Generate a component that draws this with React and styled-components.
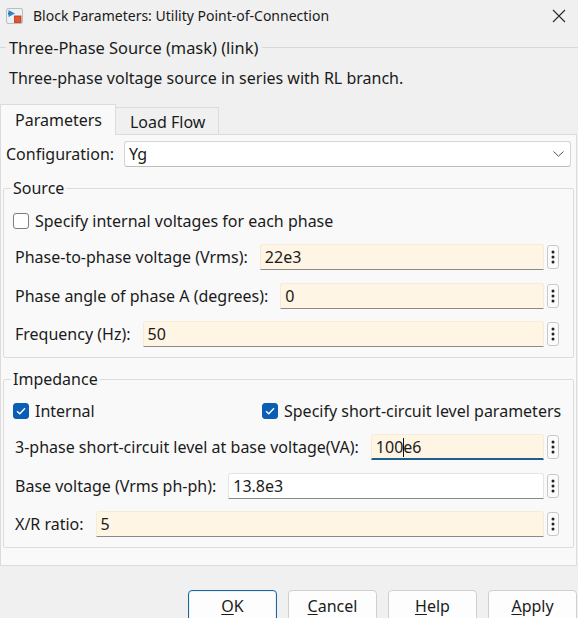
import React from "react";
import styled, { createGlobalStyle, css } from "styled-components";

const Global = createGlobalStyle`
  html, body { margin: 0; padding: 0; background: #f0f0f0; }
  body {
    font-family: "Noto Sans", "Open Sans", sans-serif;
    font-size: 16px;
    color: #1b1b1b;
  }
  * { box-sizing: border-box; }
`;

const Window = styled.div`
  width: 578px;
  height: 618px;
  overflow: hidden;
  display: flex;
  flex-direction: column;
  background: #f0f0f0;
`;

/* ---------- title bar ---------- */

const TitleBar = styled.div`
  height: 32px;
  flex: none;
  display: flex;
  align-items: center;
  padding: 0 12px 0 6px;
`;

const Title = styled.div`
  flex: 1;
  margin-left: 10px;
  font-size: 14px;
  line-height: 20px;
  color: #1a1a1a;
`;

const CloseButton = styled.div`
  width: 14px;
  height: 14px;
  display: flex;
  color: #2a2a2a;
`;

const BlockIcon = () => (
  <svg width="17" height="16" viewBox="0 0 17 16">
    <rect x="0.5" y="0.5" width="16" height="15" rx="1.5" fill="#eef1f4" stroke="#b8bec6" />
    <path d="M2.5 2 L9 5.5 L2.5 9 Z" fill="#2f86c8" />
    <rect x="2" y="4.8" width="1.4" height="1.4" fill="#1d5f93" />
    <rect x="8.5" y="8" width="6.5" height="6.5" fill="#e4572e" stroke="#b23a18" strokeWidth="0.8" />
  </svg>
);

const CloseIcon = () => (
  <svg width="14" height="14" viewBox="0 0 14 14">
    <path d="M1 1 L13 13 M13 1 L1 13" stroke="currentColor" strokeWidth="1.1" />
  </svg>
);

/* ---------- mask description ---------- */

const MaskHeader = styled.div`
  margin-top: 5px;
  height: 22px;
  display: flex;
  align-items: center;
`;

const Rule = styled.div`
  height: 1px;
  margin-top: -2px;
  background: #d8d8d8;
  width: ${(p) => (p.$grow ? "auto" : "6px")};
  flex: ${(p) => (p.$grow ? 1 : "none")};
`;

const MaskTitle = styled.div`
  padding: 0 4px 0 3px;
  font-size: 16.4px;
  line-height: 22px;
`;

const Description = styled.div`
  margin-top: 8px;
  padding-left: 9px;
  line-height: 22px;
`;

const Divider = styled.div`
  margin-top: 8px;
  height: 1px;
  background: #dadada;
`;

/* ---------- tabs ---------- */

const TabBar = styled.div`
  margin-top: 7px;
  height: 30px;
  display: flex;
  align-items: flex-end;
  position: relative;
  z-index: 1;
`;

const Tab = styled.div`
  padding: 0 13px 0 14px;
  line-height: 22px;
  display: flex;
  align-items: center;
  border: 1px solid #dcdcdc;
  border-bottom: none;
  ${(p) =>
    p.$active
      ? css`
          height: 31px;
          margin-bottom: -1px;
          background: #f9f9f9;
          padding-bottom: 1px;
        `
      : css`
          height: 27px;
          background: #f0f0f0;
          border-left: none;
          padding-top: 1px;
        `}
`;

const TabPanel = styled.div`
  width: 577px;
  height: 432px;
  flex: none;
  border: 1px solid #dcdcdc;
  background: #f9f9f9;
  padding: 6px 2px 0 2px;
  display: flex;
  flex-direction: column;
`;

/* ---------- controls ---------- */

const ConfigRow = styled.div`
  display: flex;
  align-items: center;
  gap: 10px;
  margin: 0 3px;
  height: 26px;
`;

const Label = styled.div`
  flex: none;
  line-height: 22px;
  white-space: nowrap;
`;

const Select = styled.div`
  flex: 1;
  height: 26px;
  display: flex;
  align-items: center;
  justify-content: space-between;
  padding: 0 6px 0 4px;
  background: #ffffff;
  border: 1px solid #d4d4d4;
  border-bottom-color: #bdbdbd;
  border-radius: 3px;
`;

const Chevron = () => (
  <svg width="11" height="6" viewBox="0 0 11 6">
    <path d="M0.5 0.5 L5.5 5.2 L10.5 0.5" fill="none" stroke="#555" strokeWidth="1" />
  </svg>
);

const Group = styled.fieldset`
  margin: ${(p) => p.$top}px 0 0 0;
  padding: 0 14px ${(p) => p.$bottom}px 11px;
  border: 1px solid #dcdcdc;
  border-radius: 2px;
  display: flex;
  flex-direction: column;
  gap: 12.6px;
  min-width: 0;
`;

const GroupTitle = styled.legend`
  margin-left: -4px;
  padding: 0 2px;
  line-height: 22px;
  height: 22px;
`;

const CheckRow = styled.div`
  margin-top: ${(p) => p.$top}px;
  margin-bottom: -0.6px;
  margin-left: -2px;
  height: 22px;
  display: grid;
  grid-template-columns: 249px 1fr;
  align-items: center;
`;

const Check = styled.div`
  display: flex;
  align-items: center;
  gap: 6px;
  white-space: nowrap;
`;

const Box = styled.span`
  width: 16px;
  height: 16px;
  flex: none;
  border-radius: 3px;
  display: flex;
  align-items: center;
  justify-content: center;
  ${(p) =>
    p.$checked
      ? css`
          background: #0a5fb4;
          border: 1px solid #0a5fb4;
        `
      : css`
          background: #ffffff;
          border: 1px solid #7d7d7d;
        `}
`;

const CheckMark = () => (
  <svg width="10" height="8" viewBox="0 0 10 8">
    <path d="M1 4.2 L3.8 6.8 L9 1.2" fill="none" stroke="#fff" strokeWidth="1.4" />
  </svg>
);

const ParamRow = styled.div`
  height: 26px;
  display: flex;
  align-items: center;
`;

const Field = styled.div`
  flex: 1;
  height: 26px;
  margin-left: 12px;
  padding: 0 4px;
  display: flex;
  align-items: center;
  line-height: 22px;
  border: 1px solid ${(p) => (p.$plain ? "#e4e4e4" : "#f6ebd6")};
  border-bottom: 1px solid #8a8a8a;
  border-radius: 3px 3px 0 0;
  background: ${(p) => (p.$plain ? "#ffffff" : "#fef5e5")};
  ${(p) =>
    p.$focused &&
    css`
      border-bottom: 2px solid #1d5f8f;
      padding-top: 1px;
    `}
`;

const Caret = styled.span`
  display: inline-block;
  width: 1px;
  height: 19px;
  background: #111;
  margin: 0 -1px 0 0;
`;

const MoreButton = styled.div`
  flex: none;
  width: 12px;
  height: 24px;
  margin-left: 3px;
  display: flex;
  align-items: center;
  justify-content: center;
  background: #fbfbfb;
  border: 1px solid #c9c9c9;
  border-radius: 3px;
`;

const Dots = () => (
  <svg width="4" height="14" viewBox="0 0 4 14">
    <circle cx="2" cy="2" r="1.5" fill="#222" />
    <circle cx="2" cy="7" r="1.5" fill="#222" />
    <circle cx="2" cy="12" r="1.5" fill="#222" />
  </svg>
);

/* ---------- footer ---------- */

const Footer = styled.div`
  margin-top: 24px;
  display: flex;
  justify-content: flex-end;
  gap: 11px;
  padding-right: 1px;
`;

const Button = styled.div`
  width: 89px;
  height: 32px;
  flex: none;
  display: flex;
  align-items: center;
  justify-content: center;
  line-height: 22px;
  background: #fdfdfd;
  border-radius: 4px;
  border: 1px solid ${(p) => (p.$primary ? "#1a64a0" : "#cfcfcf")};
  ${(p) =>
    p.$primary &&
    css`
      box-shadow: inset 0 0 0 1px #e9f1f8;
    `}
`;

const Key = styled.span`
  text-decoration: underline;
  text-underline-offset: 2px;
  text-decoration-thickness: 1px;
`;

const Param = ({ label, value, plain, focused, children }) => (
  <ParamRow>
    <Label>{label}</Label>
    <Field $plain={plain} $focused={focused}>
      {children ?? value}
    </Field>
    <MoreButton>
      <Dots />
    </MoreButton>
  </ParamRow>
);

export default function App() {
  return (
    <Window>
      <Global />
      <TitleBar>
        <BlockIcon />
        <Title>Block Parameters: Utility Point-of-Connection</Title>
        <CloseButton>
          <CloseIcon />
        </CloseButton>
      </TitleBar>

      <MaskHeader>
        <Rule />
        <MaskTitle>Three-Phase Source (mask) (link)</MaskTitle>
        <Rule $grow />
      </MaskHeader>
      <Description>Three-phase voltage source in series with RL branch.</Description>
      <Divider />

      <TabBar>
        <Tab $active>Parameters</Tab>
        <Tab>Load Flow</Tab>
      </TabBar>

      <TabPanel>
        <ConfigRow>
          <Label>Configuration:</Label>
          <Select>
            <span>Yg</span>
            <Chevron />
          </Select>
        </ConfigRow>

        <Group $top={10} $bottom={10}>
          <GroupTitle>Source</GroupTitle>
          <CheckRow $top={11}>
            <Check>
              <Box />
              Specify internal voltages for each phase
            </Check>
          </CheckRow>
          <Param label="Phase-to-phase voltage (Vrms):" value="22e3" />
          <Param label="Phase angle of phase A (degrees):" value="0" />
          <Param label="Frequency (Hz):" value="50" />
        </Group>

        <Group $top={10} $bottom={10}>
          <GroupTitle>Impedance</GroupTitle>
          <CheckRow $top={10}>
            <Check>
              <Box $checked>
                <CheckMark />
              </Box>
              Internal
            </Check>
            <Check>
              <Box $checked>
                <CheckMark />
              </Box>
              Specify short-circuit level parameters
            </Check>
          </CheckRow>
          <Param label="3-phase short-circuit level at base voltage(VA):" focused>
            100
            <Caret />
            e6
          </Param>
          <Param label="Base voltage (Vrms ph-ph):" value="13.8e3" plain />
          <Param label="X/R ratio:" value="5" />
        </Group>
      </TabPanel>

      <Footer>
        <Button $primary>
          <span>
            <Key>O</Key>K
          </span>
        </Button>
        <Button>
          <span>
            <Key>C</Key>ancel
          </span>
        </Button>
        <Button>
          <span>
            <Key>H</Key>elp
          </span>
        </Button>
        <Button>
          <span>
            <Key>A</Key>pply
          </span>
        </Button>
      </Footer>
    </Window>
  );
}
